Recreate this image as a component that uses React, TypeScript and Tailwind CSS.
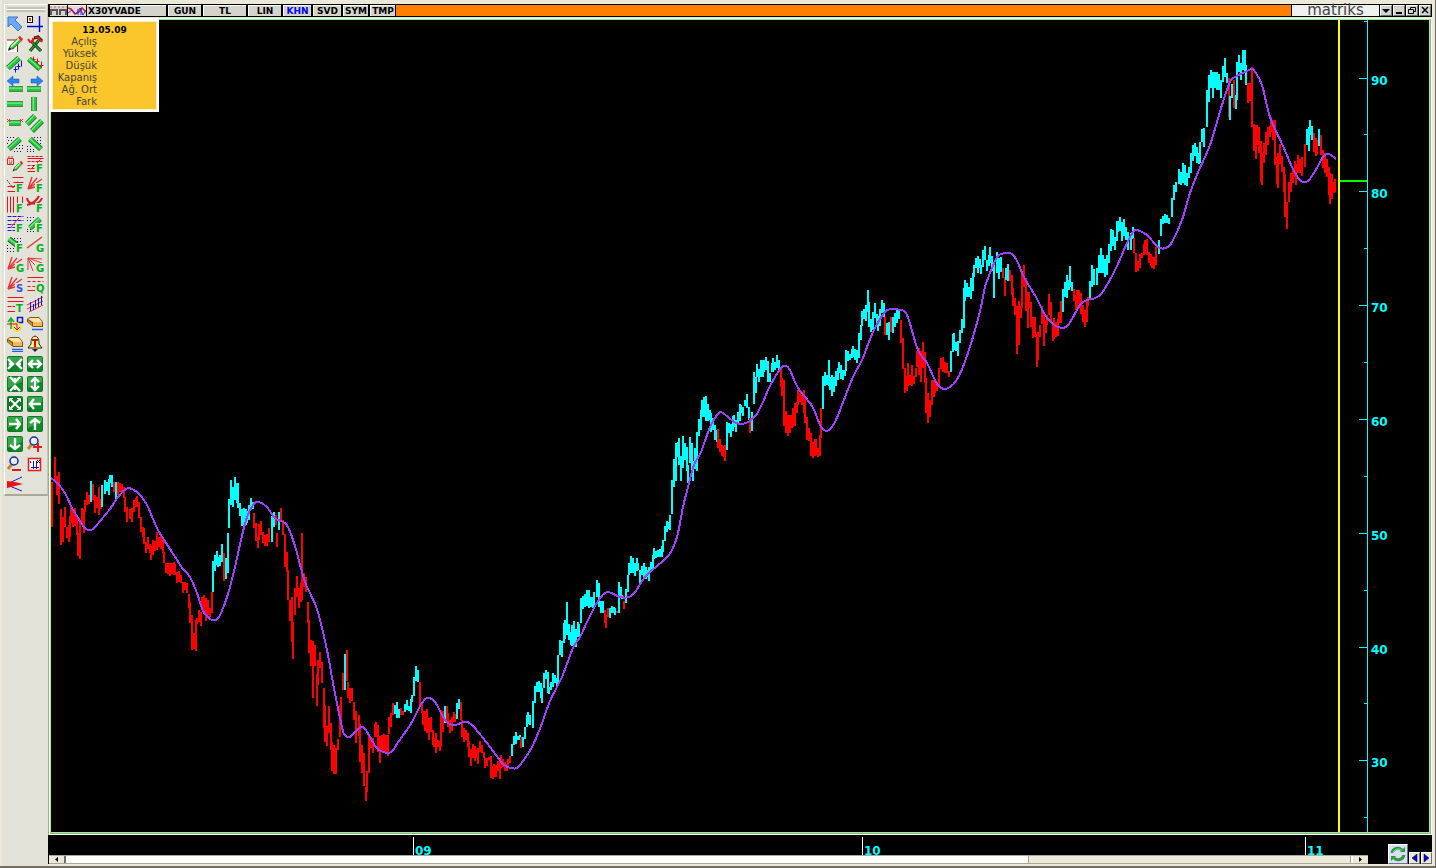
import type { ReactNode } from "react";
import clsx from "clsx";

const CYAN = "#00ffff";
const RED = "#ff0000";

// Price bars as "x,high,low", grouped by trend colour
const SERIES: { up: boolean; bars: string }[] = [
  { up: false, bars: "52,482,527 55,457,482 57,476,495 59,472,504 61,509,545 63,517,542 65,507,527 67,527,538 69,525,542 70,516,537 71,507,523 73,510,527 75,508,526 77,517,535 78,533,556 80,522,559 82,508,523 84,509,533 85,500,512 87,492,505 89,495,504" },
  { up: true, bars: "91,481,502" },
  { up: false, bars: "93,484,500 95,495,513 97,497,508 99,487,515 101,499,509" },
  { up: true, bars: "102,485,507 105,480,494 107,482,491 109,479,495 110,475,483 112,475,487" },
  { up: false, bars: "114,482,492" },
  { up: true, bars: "116,482,499" },
  { up: false, bars: "118,482,495 120,483,492 122,484,493 124,487,498 125,497,512 127,507,522 130,509,519 132,508,522 134,500,512 136,498,507 137,496,507 139,502,518 141,517,532 143,527,537 144,528,544 146,542,553 148,537,549 150,544,553 151,546,560 153,540,555 155,541,551 157,532,550 159,537,547 161,536,549 163,537,553 164,552,563 166,563,573 168,563,574 170,563,576 172,563,574 174,562,575 175,564,575 177,572,583 179,571,582 181,575,583 183,582,593 185,582,590 187,583,593 189,594,608 190,602,623 192,615,650 194,633,649 196,620,651 197,618,624 199,610,622 201,612,626 202,597,609 204,595,613 206,598,621 208,600,615 210,608,617 212,592,613" },
  { up: true, bars: "213,561,592 215,555,571 217,551,565 218,557,567 220,555,566 222,544,562" },
  { up: false, bars: "224,553,581" },
  { up: true, bars: "226,558,579 228,533,573 229,499,528 231,480,505 233,487,507 235,477,500 237,483,503 238,483,508 240,503,516 242,509,526 244,508,526 246,509,525 247,511,523 249,505,520 251,498,508 253,502,509" },
  { up: false, bars: "254,513,528 256,523,541 258,537,548 259,524,540 261,521,535 263,532,543 265,535,546 267,534,546 269,528,542" },
  { up: true, bars: "272,516,542 274,512,527" },
  { up: false, bars: "276,515,525 277,533,547" },
  { up: true, bars: "279,512,530" },
  { up: false, bars: "281,508,522 283,520,535 285,534,567 287,552,572 288,570,600 290,600,621 292,597,642 293,622,659 295,588,615 297,576,597 299,588,608 301,583,602 302,533,600 304,573,587 306,577,592 308,602,623 309,620,653 311,640,666 313,641,698 315,645,666 317,674,706 318,660,685 320,652,668 322,662,683 324,688,728 325,705,742 327,726,746 329,706,733 331,723,750 332,742,771 334,745,774 336,748,774 338,739,750 340,705,737 341,697,730 343,673,690" },
  { up: true, bars: "345,654,690" },
  { up: false, bars: "347,650,681 348,682,698 350,688,703 352,688,701 354,702,720 356,711,743 359,715,736 360,724,762 362,745,773 364,753,786 366,787,801 367,771,792 369,736,773 371,737,748 373,738,753 375,724,737 376,722,737 378,725,752 380,736,763 382,735,752 384,734,753 386,735,753 388,735,756 389,717,734 391,713,727 393,703,715" },
  { up: true, bars: "395,705,714 397,702,718 399,709,718" },
  { up: false, bars: "401,708,715 403,711,715" },
  { up: true, bars: "405,704,712 407,700,710 409,706,711 411,699,713 412,695,702 414,677,696 416,666,681 418,670,682" },
  { up: false, bars: "420,682,706 422,702,713 423,711,725 425,711,731 427,709,733 429,718,740 431,717,732 433,730,745 434,738,747 436,733,753 438,740,747 440,741,751 441,710,747 443,711,732" },
  { up: true, bars: "445,706,723" },
  { up: false, bars: "447,706,720 448,713,727 450,720,733 452,717,731 454,712,722 455,714,722" },
  { up: true, bars: "457,703,719 459,699,709" },
  { up: false, bars: "461,702,720 462,720,737 464,728,742 466,730,740 468,733,747 469,741,757 471,749,766 473,744,758 475,746,761 476,750,758 478,748,764 480,741,752 482,745,753 484,752,758 485,758,768 487,758,766 489,757,760 491,756,778 493,766,779 494,764,777 496,765,777 498,761,771 500,760,779 501,755,768 503,759,767 505,762,771 507,764,771 508,759,768 510,756,763" },
  { up: true, bars: "512,744,756 514,736,745 516,732,744 518,736,740 520,735,740" },
  { up: false, bars: "521,737,748" },
  { up: true, bars: "523,737,747 525,727,739 527,715,727 528,712,724 530,715,725 533,701,728 535,686,703 537,682,692 539,681,692 541,683,698 542,688,703 544,673,688 546,670,679 548,672,693 549,687,694 551,682,690 553,673,687 555,675,683 557,678,686 558,655,685 560,640,655 562,641,657 564,623,643 565,620,639 567,602,635 569,624,640 571,632,645 572,625,646 574,621,645 576,629,647 578,622,637 579,624,637 581,598,623 583,596,609 585,594,607 587,590,606 589,590,608 591,597,607 593,597,608 594,592,605 597,580,597 599,583,607 601,601,613 603,601,613" },
  { up: false, bars: "605,610,623 606,615,628 608,608,617" },
  { up: true, bars: "610,608,618 612,606,613 614,607,613 615,608,615" },
  { up: false, bars: "617,611,613" },
  { up: true, bars: "619,582,613 621,587,598 622,595,599" },
  { up: false, bars: "624,601,609" },
  { up: true, bars: "626,589,603 628,575,592 629,563,575 631,556,573 633,558,573 635,563,576 637,558,571 638,563,570 640,570,583 642,566,575 644,563,577 646,567,579 648,570,577 649,567,581 651,562,572 653,555,569 654,548,559 656,551,558 658,550,557 660,549,557 662,546,557 663,540,552 665,526,541 667,521,532 669,522,529 670,515,530 672,480,514 674,459,487 676,443,481 678,442,457 679,438,465 681,456,481 683,436,468 685,443,460 687,447,471 688,465,483 690,437,463 692,443,470 693,461,481 695,448,469 697,432,471 699,419,436 701,410,430 702,400,417 704,397,417 706,396,421 708,404,421 710,410,420 711,413,432 713,418,430 715,425,440 717,430,442" },
  { up: false, bars: "718,429,448 720,439,452 722,445,456 724,446,457 725,445,461" },
  { up: true, bars: "727,422,450 729,423,433 731,424,437 733,416,431 734,415,427 736,420,432 738,412,423 740,404,421 741,405,413 743,407,416 745,400,406 747,394,408 749,407,420" },
  { up: false, bars: "750,418,433" },
  { up: true, bars: "752,412,431 754,372,404 756,377,393 757,364,377 759,369,382 761,360,377 763,360,377 764,360,372 766,357,370 768,361,382 770,373,382 772,363,372 773,358,372 775,362,370 777,355,368 779,360,371" },
  { up: false, bars: "781,367,387 782,378,396 784,380,426 786,411,433 788,415,436 790,415,433 792,415,428 793,408,427 795,403,426 797,402,413 798,390,405 800,393,402 802,395,405 804,390,413 805,396,423 807,417,440 809,428,441 811,433,456 813,442,458 815,439,456 816,439,455 818,448,457 820,435,456 821,408,438" },
  { up: true, bars: "823,376,409 825,372,386 827,375,385 829,360,386 830,377,390 832,375,396 834,377,392 836,371,386 838,368,380 839,362,373 841,365,379 843,370,380 845,370,376 846,350,371 848,351,361 850,354,360 852,349,358 853,346,357 855,349,360 857,350,363 859,333,358 861,325,340 862,311,326 864,309,319 866,305,321 868,290,312 869,302,327 871,319,332 873,312,330 875,303,318 877,314,323 878,316,331 880,309,326 882,300,313 884,303,317" },
  { up: false, bars: "885,317,335" },
  { up: true, bars: "887,323,335 889,322,340" },
  { up: false, bars: "891,317,332" },
  { up: true, bars: "893,317,333 895,313,327 897,308,323 899,309,319" },
  { up: false, bars: "901,320,343 903,338,369 905,368,393 907,376,391 908,363,386 910,375,385 912,365,386 914,376,384 916,368,377 917,351,367 919,348,375 921,351,382 923,342,368 925,352,383 926,378,413 928,393,423 930,400,417 932,380,405 934,380,397 935,382,393 937,382,391 939,368,385 941,358,369 943,357,372 945,362,373 947,363,373 949,371,377" },
  { up: true, bars: "951,351,372 953,334,352 954,333,350 956,342,351 958,341,356 960,330,343 962,319,333 964,288,328 965,280,301 967,283,297 969,287,297 971,278,299 973,273,291 974,265,277 976,258,268 978,256,273 980,259,268 981,265,274 983,250,267 985,246,260 987,260,271 989,255,266 990,247,263 992,256,271 994,263,298 997,252,273 999,258,279 1001,257,272" },
  { up: false, bars: "1003,268,278 1005,277,296" },
  { up: true, bars: "1006,268,280 1008,264,281" },
  { up: false, bars: "1010,270,281 1012,275,295 1013,288,306 1015,298,315 1017,306,354 1019,301,345 1021,306,318 1022,271,308 1024,265,287 1026,278,311 1028,292,328 1029,292,308 1031,302,327 1033,317,338 1035,317,337 1037,334,367 1038,332,360 1040,325,337 1042,306,324 1044,312,346 1046,320,333 1047,315,325 1049,294,315 1051,302,323 1053,323,341 1054,318,339 1056,322,337 1058,319,336 1059,312,323 1061,301,323" },
  { up: true, bars: "1063,289,312 1065,282,297 1067,275,298 1069,280,290 1070,266,287 1072,282,291" },
  { up: false, bars: "1074,289,301 1076,295,310 1077,290,308 1079,290,304 1081,293,314 1083,305,322 1085,310,327 1087,301,322 1088,297,306" },
  { up: true, bars: "1090,281,299 1092,265,287 1094,269,285 1097,268,285 1099,255,273 1101,248,273 1103,255,273 1105,259,277 1107,255,275 1109,244,263 1111,229,251 1113,230,246 1115,237,250 1117,221,241 1118,221,232 1120,217,231 1122,222,241 1124,219,236 1126,227,240 1128,232,250 1131,233,250 1133,227,239" },
  { up: false, bars: "1134,238,253 1136,253,272 1138,261,271 1140,254,268 1142,253,258 1144,244,255 1145,240,254 1147,239,255 1149,252,263 1151,254,266 1152,257,268 1154,257,269 1156,247,265" },
  { up: true, bars: "1159,240,254 1161,219,236 1163,216,224 1165,214,223 1167,215,223 1169,218,224 1172,198,217 1174,185,200 1176,182,192 1179,169,184 1181,172,185 1183,163,183 1185,165,185 1187,173,186 1189,167,178 1191,153,173 1193,145,161 1195,143,156 1197,147,163 1199,153,164 1200,142,163 1202,129,142 1204,128,147 1207,90,127 1209,75,102 1211,70,88 1213,72,98 1215,72,88 1217,72,90 1219,74,90 1221,80,98 1223,66,82 1225,58,77 1227,73,83" },
  { up: false, bars: "1229,78,117" },
  { up: true, bars: "1230,96,120 1232,84,98" },
  { up: false, bars: "1234,80,108" },
  { up: true, bars: "1236,95,109 1237,62,100 1239,55,72 1241,63,80 1243,50,70 1245,50,72 1246,65,85" },
  { up: false, bars: "1248,83,103 1250,83,101 1252,67,127 1254,124,151 1256,125,159 1257,125,145 1259,127,153 1261,141,182 1262,153,185 1264,143,163 1266,132,155 1268,127,145 1270,126,137 1271,117,132 1273,120,140 1275,120,165 1277,157,184 1278,153,188 1280,144,164 1282,156,172 1284,167,192 1285,174,217 1287,202,229 1289,182,202 1291,173,192 1293,170,183 1295,161,177 1296,164,185 1298,155,173 1300,159,173 1302,157,176 1305,144,167" },
  { up: true, bars: "1307,129,145 1309,127,151 1310,120,135 1312,126,140" },
  { up: false, bars: "1314,133,152 1316,138,156 1317,140,155" },
  { up: true, bars: "1319,129,146" },
  { up: false, bars: "1321,135,155 1323,150,168 1325,153,173 1327,159,177 1329,167,195 1330,173,204 1332,174,199 1334,182,193 1335,179,192" },
];

const MOVING_AVERAGE =
  "50,477 58,484 65,493 72,508 80,521 86,529 93,529 100,521 110,509 118,497 126,489 132,489 140,495 147,505 158,530 172,552 183,569 190,577 197,593 203,611 210,619 216,620 221,613 228,594 235,567 241,540 247,517 254,504 259,502 267,507 275,518 283,522 288,527 295,546 305,582 317,609 327,650 333,683 342,727 345,735 350,737 357,730 363,727 369,735 376,747 383,752 391,752 399,741 412,722 420,706 427,698 435,702 442,715 448,723 455,725 465,722 473,726 490,747 503,764 511,768 517,768 523,761 532,747 541,726 550,701 562,677 573,648 580,637 588,620 598,601 607,592 620,597 629,597 635,592 645,577 657,566 669,555 677,537 683,507 688,487 694,465 701,452 710,427 717,415 721,412 728,417 736,423 746,423 756,415 763,402 768,390 775,377 782,367 786,366 790,370 798,388 812,406 820,425 824,430 829,430 835,422 842,405 853,377 862,360 873,332 885,312 892,309 900,310 907,315 918,350 927,363 937,384 944,389 950,387 956,381 963,367 973,337 981,307 985,287 992,268 998,256 1005,253 1012,254 1017,261 1025,279 1036,297 1045,315 1052,323 1058,327 1066,327 1072,319 1080,305 1087,300 1093,299 1100,295 1107,285 1117,266 1127,243 1133,232 1137,230 1147,235 1158,247 1166,248 1172,242 1182,220 1190,193 1199,170 1210,145 1222,105 1230,82 1235,77 1245,72 1252,69 1255,72 1262,85 1270,117 1283,146 1293,169 1301,181 1308,181 1317,168 1323,157 1329,154 1336,159";

const PRICE_LEVELS = [
  { label: "90", y: 78 },
  { label: "80", y: 191 },
  { label: "70", y: 305 },
  { label: "60", y: 419 },
  { label: "50", y: 533 },
  { label: "40", y: 647 },
  { label: "30", y: 760 },
];
const MINOR_LEVELS = [21, 134, 248, 362, 476, 590, 703, 817];
const YEARS = [
  { label: "09", x: 413 },
  { label: "10", x: 862 },
  { label: "11", x: 1305 },
];

function barsToPath(bars: string) {
  return bars
    .split(" ")
    .map((bar) => {
      const [x, high, low] = bar.split(",").map(Number);
      return `M${x} ${high}V${low}`;
    })
    .join("");
}

// Catmull-Rom spline through the points
function smoothPath(points: string) {
  const p = points.split(" ").map((point) => point.split(",").map(Number));
  let d = `M${p[0][0]} ${p[0][1]}`;
  for (let i = 0; i < p.length - 1; i++) {
    const a = p[i - 1] ?? p[i];
    const b = p[i];
    const c = p[i + 1];
    const e = p[i + 2] ?? c;
    d += `C${b[0] + (c[0] - a[0]) / 6} ${b[1] + (c[1] - a[1]) / 6} ${c[0] - (e[0] - b[0]) / 6} ${c[1] - (e[1] - b[1]) / 6} ${c[0]} ${c[1]}`;
  }
  return d;
}

/* ---------- toolbox icons, all on a 16x16 grid ---------- */

// Green plastic bar
function Bar({ d }: { d: string }) {
  return (
    <g fill="none">
      <path d={d} stroke="#0b6b1c" strokeWidth={5.5} />
      <path d={d} stroke="#2cc442" strokeWidth={4} />
      <path d={d} stroke="#7cf08a" strokeWidth={1.2} transform="translate(-.7 -.9)" />
    </g>
  );
}

function Letter({ c, color = "#00b020" }: { c: string; color?: string }) {
  return (
    <g>
      <rect x={8} y={7} width={8} height={9} fill="#e2e2d8" />
      <text x={9} y={16} fontSize={10} fontWeight={700} fill={color} fontFamily="DejaVu Sans, sans-serif">
        {c}
      </text>
    </g>
  );
}

function Lines({ d, color = "#e8101c", dash }: { d: string; color?: string; dash?: string }) {
  return <path d={d} transform="translate(.5 .5)" fill="none" stroke={color} strokeWidth={1} strokeDasharray={dash} />;
}

function Fan() {
  return <path d="M1 13L5 1M1 13L10 2M1 13L15 3M1 13L15 9" fill="none" stroke="#e4383e" strokeWidth={1.4} />;
}

function Dots({ d }: { d: string }) {
  return <path d={d} transform="translate(0 .5)" fill="none" stroke="#10107c" strokeWidth={1} strokeDasharray="1 2" />;
}

function Tile({ d }: { d: string }) {
  return (
    <g>
      <rect width={16} height={16} rx={2} fill="#0e7a26" />
      <path d="M1 1h14v5L1 12z" fill="#36a64a" />
      <path d="M8 8h7v7H5z" fill="#0f8a2a" />
      <path d={d} fill="none" stroke="#fff" strokeWidth={2.4} />
    </g>
  );
}

function Pencil() {
  return (
    <g>
      <path d="M4 12L12 4" stroke="#157a22" strokeWidth={5} />
      <path d="M4 11L12 3" stroke="#c8f0b8" strokeWidth={2} />
      <path d="M5 12L13 5" stroke="#3ccc48" strokeWidth={1.5} />
      <path d="M11 1l2-1 3 3-2 3z" fill="#e02828" />
      <path d="M1 15l1-4 3 2z" fill="#222" />
    </g>
  );
}

function Eraser() {
  return (
    <g>
      <path d="M0 3l3-2h9l4 5v5H6L0 6z" fill="#7a5414" />
      <path d="M1 3l2-1h9l3 4H6z" fill="#ffe6a8" />
      <path d="M6 6h9v4H6z" fill="#f2b860" />
      <path d="M1 4l4 3v3L1 6z" fill="#d08c30" />
      <path d="M5 13.500h11" stroke="#2060e8" strokeWidth={1.5} />
    </g>
  );
}

function Magnifier() {
  return (
    <g>
      <path d="M5 8l-4 5" stroke="#c88830" strokeWidth={3} />
      <circle cx={7} cy={5} r={4} fill="#d8ecff" stroke="#1c2c90" strokeWidth={1.5} />
      <circle cx={6} cy={4} r={1.5} fill="#fff" />
    </g>
  );
}

const TOOLS: { name: string; icon: ReactNode }[] = [
  { name: "Select", icon: <path d="M1 1h10L8 4l7 7-4 4-7-7-3 3z" fill="#6ca8f4" stroke="#3c74d0" /> },
  {
    name: "Crosshair",
    icon: (
      <g>
        <path d="M0 10.500h16M12.500 0v16" stroke="#0000e0" strokeWidth={1.4} />
        <rect x={.5} y={.5} width={5} height={6} fill="#fff" stroke="#000" />
        <path d="M3 2v3" stroke="#f00" strokeWidth={1.5} />
      </g>
    ),
  },
  { name: "Draw", icon: <g><path d="M0 4h11v12H0z" fill="#fff" /><path d="M0 4h10.500v12" fill="none" stroke="#8c1c1c" /><Pencil /></g> },
  {
    name: "Settings",
    icon: (
      <g fill="none">
        <path d="M3 15L12 4" stroke="#0c5014" strokeWidth={3} />
        <path d="M3 15L12 4" stroke="#38c848" strokeWidth={1} />
        <path d="M4 5l10 10" stroke="#111" strokeWidth={3} />
        <path d="M4 5l10 10" stroke="#2cb03c" strokeWidth={1.4} />
        <path d="M1 3l2 3 3-1V2" stroke="#f01818" strokeWidth={2} />
        <path d="M7 2l4-1 4 4" stroke="#111" strokeWidth={3} />
        <path d="M8 1l4 1 3 4" stroke="#f01818" strokeWidth={2} />
      </g>
    ),
  },
  { name: "Rising channel on lows", icon: <g><Bar d="M1 12L12 2" /><Lines d="M8 10v6M6 13h4M11 7v6M9 10h4M14 4v6" color="#1010e0" /></g> },
  { name: "Falling channel on highs", icon: <g><Lines d="M6 0v5M4 3h4M10 2v6M8 5h4M14 5v7M12 9h4" /><Bar d="M2 3l11 10" /></g> },
  { name: "Extend left", icon: <g><Bar d="M2 13h14" /><path d="M0 5l6-5v3h6v4H6v3z" fill="#2c84ec" stroke="#1254b0" strokeWidth={.5} /></g> },
  { name: "Extend right", icon: <g><Bar d="M0 13h14" /><path d="M16 5l-6-5v3H4v4h6v3z" fill="#2c84ec" stroke="#1254b0" strokeWidth={.5} /></g> },
  { name: "Horizontal line", icon: <Bar d="M0 8h16" /> },
  { name: "Vertical line", icon: <Bar d="M7 1v14" /> },
  { name: "Segment", icon: <g><Bar d="M2 7h12" /><path d="M0 3l3 3M3 3L0 6M13 3l3 3M16 3l-3 3" stroke="#e03030" /></g> },
  { name: "Parallel lines", icon: <g><g transform="translate(-1 -1)"><Bar d="M1 9L9 1" /></g><Bar d="M5 15L15 5" /></g> },
  { name: "Rising zone", icon: <g><Dots d="M0 1h8M1 4h5M0 7h3M12 9h4M9 12h7M7 15h9" /><Bar d="M2 13L13 3" /></g> },
  { name: "Falling zone", icon: <g><Dots d="M7 1h9M10 4h6M13 7h3M0 10h5M0 13h7M0 15h9" /><Bar d="M3 3l11 10" /></g> },
  {
    name: "Date note",
    icon: (
      <g>
        <g transform="translate(5 5) scale(.7)"><Pencil /></g>
        <path d="M.5 2.500h6v6h-6zM2 0v2M5 0v2M2 5h1M4 5h1M2 7h3" fill="none" stroke="#e02020" />
      </g>
    ),
  },
  { name: "Fibonacci retracement", icon: <g><Lines d="M0 0h16M0 5h16M0 9h8M0 12h8" dash="3 1" /><Lines d="M0 2h16M13 3L3 13M0 15h8" /><Letter c="F" /></g> },
  { name: "Fibonacci extension", icon: <g><Lines d="M5 1h11M6 6h10M0 10h8M0 15h8" /><path d="M0 4l6 8 5-7" fill="none" stroke="#a02020" strokeDasharray="2 1" /><Letter c="F" /></g> },
  { name: "Fibonacci fan", icon: <g><Fan /><Letter c="F" /></g> },
  { name: "Fibonacci time zones", icon: <g><Lines d="M0 0v16M3 0v16M6 0v16M10 0v16M15 0v7" /><Letter c="F" /></g> },
  { name: "Fibonacci arcs", icon: <g><path d="M0 2c1 7 12 8 15 0M0 9c4-1 9-3 12-9" fill="none" stroke="#d02028" strokeWidth={2} /><Letter c="F" /></g> },
  { name: "Fibonacci levels", icon: <g><Lines d="M0 0h16M0 4h16M0 8h8M0 11h8M0 14h8" color="#1818e8" dash="4 1" /><path d="M12 2L3 12" stroke="#e02020" /><Letter c="F" /></g> },
  { name: "Fibonacci rising channel", icon: <g><Dots d="M0 1h7M0 4h5M0 13h5M0 15h7" /><Bar d="M3 12L13 3" /><Letter c="F" /></g> },
  { name: "Fibonacci falling channel", icon: <g><Dots d="M7 2h9M10 5h6M0 9h3M0 12h7M0 15h8" /><Bar d="M2 3l9 7" /><Letter c="F" /></g> },
  { name: "Gann line", icon: <g><path d="M0 12L15 1" stroke="#e4383e" strokeWidth={1.5} /><Letter c="G" /></g> },
  { name: "Gann fan", icon: <g><Fan /><Letter c="G" /></g> },
  { name: "Gann falling fan", icon: <g><path d="M1 2L6 15M1 2l9 9M1 2l14 1M1 2l14 5M1 2v12" fill="none" stroke="#e4383e" /><Letter c="G" /></g> },
  { name: "Speed lines", icon: <g><Fan /><Letter c="S" color="#3c50e0" /></g> },
  { name: "Quadrant lines", icon: <g><Lines d="M0 1h16M0 14h8" /><Lines d="M0 5h16M0 10h8" dash="3 2" /><Letter c="Q" /></g> },
  { name: "Tirone levels", icon: <g><Lines d="M0 1h16M0 5h16M0 15h8" /><Lines d="M0 10h8" dash="4 1" /><Letter c="T" /></g> },
  { name: "Regression channel", icon: <g fill="none"><path d="M0 9L16 1M0 13L16 5M2 16l14-7" stroke="#e02828" /><path d="M3.500 6v9M6.500 8v6M8.500 4v8M11.500 2v9M14.500 0v9" stroke="#1414d8" /></g> },
  {
    name: "Shapes",
    icon: (
      <g fill="none">
        <path d="M10.500 1.500h5v5h-5z" stroke="#1010e0" strokeWidth={1.5} />
        <circle cx={10} cy={11} r={4} stroke="#f4e800" strokeWidth={1.5} />
        <path d="M4 13V3M1 6l3-4 3 4" stroke="#10b020" strokeWidth={1.5} />
        <path d="M0 8h10v5M7 11l3 3 3-3" stroke="#e01010" />
      </g>
    ),
  },
  { name: "Erase", icon: <Eraser /> },
  { name: "Erase all", icon: <g><Eraser /><path d="M5 15.500h11" stroke="#2060e8" /></g> },
  {
    name: "Alarm",
    icon: (
      <g>
        <path d="M8 0c-4 1-4 5-4 8l-3 4h14l-3-4c0-3 0-7-4-8z" fill="#fff080" stroke="#222" />
        <path d="M5 13h6l-3 3z" fill="#222" />
        <path d="M5 4h6M8 4v7" stroke="#c01818" strokeWidth={2} />
      </g>
    ),
  },
  { name: "Compress horizontally", icon: <Tile d="M1 3l5 5-5 5M15 3l-5 5 5 5M2 8h4M14 8h-4" /> },
  { name: "Expand horizontally", icon: <Tile d="M2 8h12M6 4L2 8l4 4M10 4l4 4-4 4" /> },
  { name: "Compress vertically", icon: <Tile d="M3 1l5 5 5-5M3 15l5-5 5 5M8 2v4M8 14v-4" /> },
  { name: "Expand vertically", icon: <Tile d="M8 2v12M4 6l4-4 4 4M4 10l4 4 4-4" /> },
  {
    name: "Fit to window",
    icon: (
      <g fill="none" stroke="#fff">
        <rect width={16} height={16} rx={2} fill="#0e7a26" stroke="none" />
        <path d="M3 3l10 10M13 3L3 13" strokeWidth={2} />
        <path d="M2.500 6V2.500H6M10 2.500h3.500V6M13.500 10v3.500H10M6 13.500H2.500V10" />
      </g>
    ),
  },
  { name: "Scroll left", icon: <Tile d="M14 8H3M7 3L3 8l4 5" /> },
  { name: "Scroll right", icon: <Tile d="M2 8h11M9 3l4 5-4 5" /> },
  { name: "Scroll up", icon: <Tile d="M8 14V3M3 7l5-4 5 4" /> },
  { name: "Scroll down", icon: <Tile d="M8 2v11M3 9l5 4 5-4" /> },
  { name: "Zoom in", icon: <g><Magnifier /><path d="M6 11h9M11 7v9" stroke="#f01818" strokeWidth={2} /></g> },
  { name: "Zoom out", icon: <g><Magnifier /><path d="M5 14h9" stroke="#e01818" strokeWidth={2} /></g> },
  {
    name: "Axes",
    icon: (
      <g fill="none">
        <rect x={1.5} y={2.5} width={12} height={12} fill="#fff" stroke="#f01818" strokeWidth={1.5} />
        <path d="M6.500 5v8M9.500 5v8M4 11.500h8" stroke="#1010d0" />
        <path d="M3 5l1 2M10 4l3 3M13 4l-3 3" stroke="#111" />
      </g>
    ),
  },
  { name: "Projection", icon: <g><path d="M0 8L15 1M0 9l15 6" stroke="#1818d8" /><path d="M0 5l8 1 8 2-8 2-8 2z" fill="#f01010" /></g> },
];

const MODES = [
  { label: "GUN", width: "w-[33px]" },
  { label: "TL", width: "w-[43px]" },
  { label: "LIN", width: "w-[33px]" },
  { label: "KHN", width: "w-7", active: true },
  { label: "SVD", width: "w-7" },
  { label: "SYM", width: "w-[25px]" },
  { label: "TMP", width: "w-[25px]" },
];

const QUOTE_FIELDS = ["Açılış", "Yüksek", "Düşük", "Kapanış", "Ağ. Ort", "Fark"];

function Toolbox() {
  return (
    <aside className="w-12 shrink-0 bg-[#e2e2d8] border-l-2 border-[#ece9d8] pt-1">
      <div className="ml-0.5 border-t border-l border-white border-b-2 border-b-[#aca899] border-r border-r-[#c8c5b5] pt-0.5 pb-0.5 pl-0.5">
        <div className="mr-0.5 h-[5px] border-y-2 border-[#c4c2b4] bg-white" />
        <div className="mt-1 grid grid-cols-[16px_16px] gap-1">
          {TOOLS.map((tool) => (
            <button key={tool.name} type="button" aria-label={tool.name} className="size-4">
              <svg viewBox="0 0 16 16" className="block size-4 overflow-visible">
                {tool.icon}
              </svg>
            </button>
          ))}
        </div>
      </div>
    </aside>
  );
}

function WindowButton({ name, children }: { name: string; children: ReactNode }) {
  return (
    <button type="button" aria-label={name} className="w-3 bg-[#d4d4cc] border border-t-white border-l-white border-b-gray-500 border-r-gray-500">
      <svg viewBox="0 0 10 9" className="block h-[9px] w-2.5">
        {children}
      </svg>
    </button>
  );
}

function TitleBar() {
  return (
    <header className="flex h-[13px] shrink-0 gap-px bg-black p-px text-[9px] leading-[11px] font-bold">
      <button type="button" aria-label="Ruler" className="ml-px w-[17px] bg-[#d4d4cc] border-t border-white">
        <svg viewBox="0 0 17 10" className="block h-2.5 w-[17px]">
          <path d="M1 9V4h6v5M10 9V4h6v5" fill="none" stroke="#555" strokeWidth={2} />
          <path d="M0 1h17" stroke="#c66" strokeDasharray="2 2" />
        </svg>
      </button>
      <button type="button" aria-label="Indicators" className="w-[18px] bg-[#e8d8d8] border-t border-white">
        <svg viewBox="0 0 18 10" className="block h-2.5 w-[18px]" fill="none">
          <path d="M0 2l3 1 4 5 4-2 3-4 4 4" stroke="#e01818" strokeWidth={1.5} />
          <path d="M0 7l4-3 4 4 4-6 3 7 3-5M10 3v6M13 2v7" stroke="#2030e0" />
        </svg>
      </button>
      <button type="button" className="w-[79px] bg-[#d4d4cc] border-t border-white pl-px text-left">
        X30YVADE
      </button>
      {MODES.map((mode) => (
        <button
          key={mode.label}
          type="button"
          className={clsx("bg-[#d4d4cc] border-t border-l border-white ml-px text-center", mode.width, mode.active && "text-[#0000ff]")}
        >
          {mode.label}
        </button>
      ))}
      <div className="flex-1 bg-[#ff8000]" />
      <div className="w-[87px] bg-[#f0f0ee] text-center text-[15px] leading-[11px] font-normal text-[#444]">matriks</div>
      <WindowButton name="Menu">
        <path d="M1 3h8L5 7z" />
      </WindowButton>
      <WindowButton name="Minimize">
        <path d="M2 7h6" stroke="#000" strokeWidth={2} />
      </WindowButton>
      <WindowButton name="Restore">
        <path d="M3.500 3V1.500h5v4H7M1.500 3.500h5v4h-5z" fill="none" stroke="#000" />
      </WindowButton>
      <WindowButton name="Close">
        <path d="M2 1l6 6M8 1L2 7" stroke="#000" strokeWidth={1.5} />
      </WindowButton>
    </header>
  );
}

function QuoteBox() {
  return (
    <section className="absolute -top-px -left-px h-[93px] w-[109px] border-2 border-white bg-[#fbc62c] outline-1 -outline-offset-3 outline-[#fff0c8] pt-[3px] text-[10px] leading-3 text-[#444]">
      <h2 className="text-center text-[9px] leading-3 font-bold text-black">13.05.09</h2>
      <ul className="w-[45px] text-right">
        {QUOTE_FIELDS.map((field) => (
          <li key={field}>{field}</li>
        ))}
      </ul>
    </section>
  );
}

function PriceChart() {
  return (
    <svg viewBox="51 20 1378 812" preserveAspectRatio="xMinYMin meet" className="block h-full w-full" fill="none">
      <g shapeRendering="crispEdges" strokeWidth={2}>
        {SERIES.map((run, i) => (
          <path key={i} d={barsToPath(run.bars)} stroke={run.up ? CYAN : RED} />
        ))}
        <path d={smoothPath(MOVING_AVERAGE)} stroke="#9f40ff" />
        <path d="M1339 20V832" stroke="#ffff00" />
        <path d="M1340 181H1367" stroke="#00ff00" />
      </g>

      {/* price scale */}
      <g stroke={CYAN} strokeWidth={1} shapeRendering="crispEdges">
        <path d="M1367.500 20V832" />
        {PRICE_LEVELS.map((level) => (
          <path key={level.label} d={`M1359 ${level.y + 0.5}H1367`} />
        ))}
        {MINOR_LEVELS.map((y) => (
          <path key={y} d={`M1364 ${y + 0.5}H1367`} />
        ))}
      </g>
      <g fill={CYAN} fontSize={12} fontWeight={700}>
        {PRICE_LEVELS.map((level) => (
          <text key={level.label} x={1371} y={level.y + 7}>
            {level.label}
          </text>
        ))}
      </g>
    </svg>
  );
}

function TimeAxis() {
  return (
    <svg viewBox="48 835 1320 20" preserveAspectRatio="xMinYMin meet" className="block h-5 w-full overflow-visible">
      {YEARS.map((year) => (
        <g key={year.label}>
          <path d={`M${year.x + 0.5} 837V855`} stroke="#fff" shapeRendering="crispEdges" />
          <text x={year.x + 2} y={855} fill={CYAN} fontSize={12} fontWeight={700}>
            {year.label}
          </text>
        </g>
      ))}
    </svg>
  );
}

function ScrollBar() {
  return (
    <div className="ml-px flex h-[9px] border-y border-[#aca899] bg-white">
      <button type="button" aria-label="Scroll back" className="w-[17px] bg-[#ece9d8] border-r-2 border-[#716f64]">
        <svg viewBox="0 0 15 7" className="block h-[7px] w-[15px]">
          <path d="M9 1v5L6 3.500z" />
        </svg>
      </button>
      <div className="flex-3 bg-[#fdfdfb]" />
      <div className="flex-1 border-l border-r border-[#aca899] bg-[#ece9d8]" />
      <button type="button" aria-label="Scroll forward" className="w-[17px] bg-[#ece9d8] border-l-2 border-white">
        <svg viewBox="0 0 15 7" className="block h-[7px] w-[15px]">
          <path d="M6 1v5l3-2.500z" />
        </svg>
      </button>
    </div>
  );
}

function FooterButtons() {
  return (
    <div className="flex w-16 shrink-0 items-end justify-end gap-px">
      <button type="button" aria-label="Refresh" className="size-5 border border-t-white border-l-white border-b-gray-500 border-r-gray-500 bg-[#dcdcff]">
        <svg viewBox="0 0 18 18" className="block size-[18px]" fill="none">
          <path d="M3 8c1-5 7-6 10-3M15 10c-1 5-7 6-10 3" stroke="#2a9c38" strokeWidth={3} />
          <path d="M11 7h5V2zM7 11H2v5z" fill="#2a9c38" />
          <path d="M4 8c1-4 6-5 8-3" stroke="#8ce890" />
        </svg>
      </button>
      <button type="button" aria-label="Previous" className="h-3 w-[11px] border border-t-white border-l-white border-b-gray-500 border-r-gray-500 bg-[#ece9d8]">
        <svg viewBox="0 0 9 10" className="block h-2.5 w-[9px]">
          <path d="M7 1v8L2 5z" fill="#0000e0" stroke="#000" strokeWidth={.5} />
        </svg>
      </button>
      <button type="button" aria-label="Next" className="h-3 w-[11px] border border-t-white border-l-white border-b-gray-500 border-r-gray-500 bg-[#ece9d8]">
        <svg viewBox="0 0 9 10" className="block h-2.5 w-[9px]">
          <path d="M2 1v8l5-4z" fill="#0000e0" stroke="#000" strokeWidth={.5} />
        </svg>
      </button>
    </div>
  );
}

export default function App() {
  return (
    <div className="flex h-screen overflow-hidden border-b-2 border-r border-[#716f64] bg-[#ece9d8] font-['DejaVu_Sans',Verdana,sans-serif] text-black">
      <Toolbox />
      <main className="flex min-w-0 flex-1 flex-col pt-1 pr-[3px] pb-0.5">
        <TitleBar />
        <div className="min-h-0 flex-1 border-t border-t-[#ece9d8] border-l border-l-[#aca899] bg-white p-px">
          <div className="h-full border-r border-b border-[#aca899]">
            <div className="relative h-full border border-[#80ff80] bg-black">
              <PriceChart />
              <QuoteBox />
            </div>
          </div>
        </div>
        <footer className="flex h-[29px] shrink-0 bg-black">
          <div className="min-w-0 flex-1">
            <TimeAxis />
            <ScrollBar />
          </div>
          <FooterButtons />
        </footer>
      </main>
    </div>
  );
}
